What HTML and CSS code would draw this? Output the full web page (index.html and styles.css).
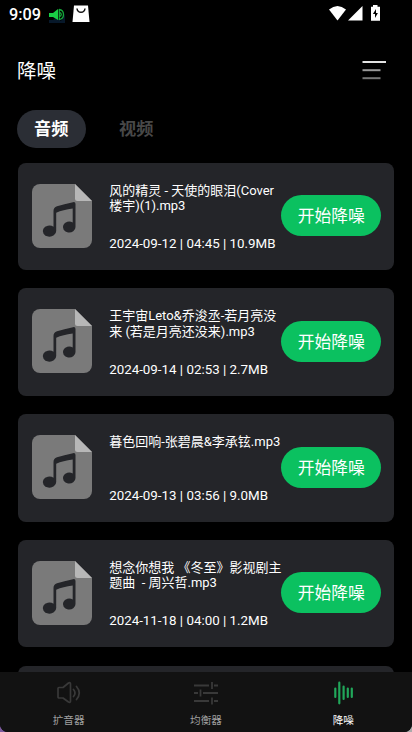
FILE: index.html
```html
<!DOCTYPE html>
<html lang="zh-CN">
<head>
<meta charset="utf-8">
<title>降噪</title>
<link rel="stylesheet" href="styles.css">
</head>
<body>
<svg class="defs" aria-hidden="true">
  <symbol id="music" viewBox="0 0 60 64">
    <path fill="#7a7a7a" d="M8 0H43L60 17V56a8 8 0 0 1-8 8H8a8 8 0 0 1-8-8V8a8 8 0 0 1 8-8z"/>
    <path fill="#b7b7b7" d="M43 0L60 17H45.500a2.500 2.500 0 0 1-2.500-2.500z"/>
    <path fill="#242529" d="M21.500 27Q21.500 23.500 25 22.300Q32 20 41 18.200Q43.500 17.700 43.500 20V43A6.300 5.500 0 1 1 40.700 38.500V24.500Q31 25.700 24.200 28.800V47A6.700 5.500 0 1 1 21.500 42.700z"/>
  </symbol>
</svg>
<div class="phone">
  <div class="status">
    <span class="clock">9:09</span>
    <svg class="st-speaker" width="17" height="16" viewBox="0 0 17 16">
      <path fill="#07182a" d="M0 12H4L7 9 12 13 16 6V15H0z"/>
      <path fill="#19cf45" d="M0 5H4L9 1V12L4 9H0z"/>
      <path fill="none" stroke="#15a83a" stroke-width="1.300" d="M10 1.500Q14.500 2 14.500 6.500T10 11.500M10 4Q12.300 5 12.300 6.500T10 9M10.300 1V12"/>
    </svg>
    <svg class="st-bag" width="18" height="18" viewBox="0 0 18 18">
      <path fill="#fff" d="M2 .5H16L17.500 17H.5z"/>
      <path fill="none" stroke="#111" stroke-width="1.500" d="M5 3.500Q5.500 7.300 9 7.300T13 3.500"/>
    </svg>
    <svg class="st-right" width="52" height="17" viewBox="0 0 52 17">
      <path fill="#fff" d="M0 4.500Q8.500-2.500 17 4.500L8.500 15.500z"/>
      <path fill="#fff" d="M19 15.500L33.500 1V15.500z"/>
      <path fill="#fff" d="M44 0H48.500V1.700H51V15.700H42V1.700H44z"/>
      <path fill="#000" d="M47 4L43.900 9H46V13L48.900 8H47z"/>
    </svg>
  </div>
  <header class="header">
    <h1>降噪</h1>
    <svg width="24" height="20" viewBox="0 0 24 20">
      <path stroke="#e2e2e2" stroke-width="2" d="M.5 2H24"/>
      <path stroke="#999" stroke-width="2" d="M.5 10.200H18.500"/>
      <path stroke="#777" stroke-width="2" d="M.5 18.200H18.500"/>
    </svg>
  </header>
  <div class="tabs"><span class="tab active">音频</span><span class="tab">视频</span></div>
  <main class="list">
    <article class="card">
      <svg class="file"><use href="#music"/></svg>
      <div class="info"><p class="name">风的精灵 - 天使的眼泪(Cover<br>楼宇)(1).mp3</p><p class="meta">2024-09-12 | 04:45 | 10.9MB</p></div>
      <button class="start">开始降噪</button>
    </article>
    <article class="card">
      <svg class="file"><use href="#music"/></svg>
      <div class="info"><p class="name">王宇宙Leto&amp;乔浚丞-若月亮没<br>来 (若是月亮还没来).mp3</p><p class="meta">2024-09-14 | 02:53 | 2.7MB</p></div>
      <button class="start">开始降噪</button>
    </article>
    <article class="card">
      <svg class="file"><use href="#music"/></svg>
      <div class="info"><p class="name">暮色回响-张碧晨&amp;李承铉.mp3</p><p class="meta">2024-09-13 | 03:56 | 9.0MB</p></div>
      <button class="start">开始降噪</button>
    </article>
    <article class="card">
      <svg class="file"><use href="#music"/></svg>
      <div class="info"><p class="name">想念你想我 《冬至》影视剧主<br>题曲&nbsp; - 周兴哲.mp3</p><p class="meta">2024-11-18 | 04:00 | 1.2MB</p></div>
      <button class="start">开始降噪</button>
    </article>
    <article class="card"></article>
  </main>
  <nav class="nav">
    <a class="item">
      <svg width="26" height="24" viewBox="0 0 26 24" fill="none" stroke="#393939" stroke-width="1.700" stroke-linecap="round" stroke-linejoin="round">
        <path d="M3 6.500H7L12.500 2Q14.500 1 14.500 3V20Q14.500 22 12.500 21L7 17H3Q2 17 2 16V7.500Q2 6.500 3 6.500zM17.500 8.500Q20.500 12 17.500 15.500M20.500 5.500Q26 12 20.500 18.500"/>
      </svg>
      <span>扩音器</span>
    </a>
    <a class="item">
      <svg width="26" height="24" viewBox="0 0 26 24" fill="none" stroke="#393939" stroke-width="1.800">
        <path d="M1 4.500H16M19 1V8M21 4.500H25M1 12H5M7.500 8.500V15.500M10 12H25M1 20H16M19 16.500V23.500M21 20H25"/>
      </svg>
      <span>均衡器</span>
    </a>
    <a class="item on">
      <svg width="26" height="24" viewBox="0 0 26 24" fill="none" stroke="#21a75a" stroke-width="2.200" stroke-linecap="round">
        <path d="M5.300 7.500V16M9.300 1.700V22.300M13.600 5.500V18M17.800 7.500V16M21.800 7.500V16"/>
      </svg>
      <span>降噪</span>
    </a>
  </nav>
</div>
</body>
</html>
```
FILE: styles.css
```css
* { box-sizing: border-box; margin: 0; padding: 0; }
html, body { height: 732px; overflow: hidden; }
body {
  background: linear-gradient(90deg, #7d5c9e 0 50%, #aaa 50%);
  font-family: Roboto, "Noto Sans CJK SC", sans-serif;
  color: #fff;
}
.defs { position: absolute; width: 0; height: 0; }
.phone {
  display: flex;
  flex-direction: column;
  width: 412px;
  height: 732px;
  overflow: hidden;
  background: #000;
  border-radius: 0 0 8px 8px;
}
.status { display: flex; flex: none; height: 42px; padding: 5px 31px 0 9px; }
.clock { width: 40px; font-size: 16.300px; font-weight: 500; line-height: 19px; }
.st-speaker { margin-top: 3px; }
.st-bag { margin-left: 6px; }
.st-right { margin-left: auto; }
.header {
  display: flex;
  flex: none;
  align-items: center;
  justify-content: space-between;
  height: 56px;
  padding: 0 26px 0 17px;
}
.header h1 { padding-top: 3px; font-size: 19.500px; font-weight: 400; line-height: 28px; }
.tabs { display: flex; flex: none; height: 64.500px; padding: 12px 17px 0; }
.tab {
  width: 68.500px;
  height: 38px;
  border-radius: 19px;
  color: #484848;
  font-size: 17.200px;
  font-weight: 700;
  line-height: 39px;
  text-align: center;
}
.tab + .tab { margin-left: 16.500px; }
.tab.active { background: #2b2e35; color: #fff; }
.list {
  display: flex;
  flex: 1;
  flex-direction: column;
  gap: 18.300px;
  min-height: 0;
  padding: 0 18px 0 17.500px;
  overflow: hidden;
}
.card {
  display: flex;
  flex: none;
  height: 107.500px;
  padding: 21px 12.500px 0 14.500px;
  background: #242529;
  border-radius: 8px;
}
.file { width: 60px; height: 64px; margin-right: 17.200px; }
.info { width: 171.800px; margin-top: -1px; white-space: nowrap; }
.name { height: 53.500px; font-size: 13px; line-height: 15.500px; }
.meta { font-size: 13.350px; line-height: 16px; }
.start {
  width: 100.500px;
  height: 41px;
  margin-top: 11.500px;
  background: #0bc160;
  border: 0;
  border-radius: 21px;
  color: #fff;
  font: 400 16.800px/42px Roboto, "Noto Sans CJK SC", sans-serif;
}
.nav { display: flex; flex: none; height: 60px; background: #121212; }
.item {
  display: flex;
  flex: 1;
  flex-direction: column;
  align-items: center;
  padding-top: 9px;
  color: #a0a0a0;
  font-size: 10.600px;
  line-height: 16px;
}
.item span { margin-top: 8px; }
.item.on { color: #fff; }
```
